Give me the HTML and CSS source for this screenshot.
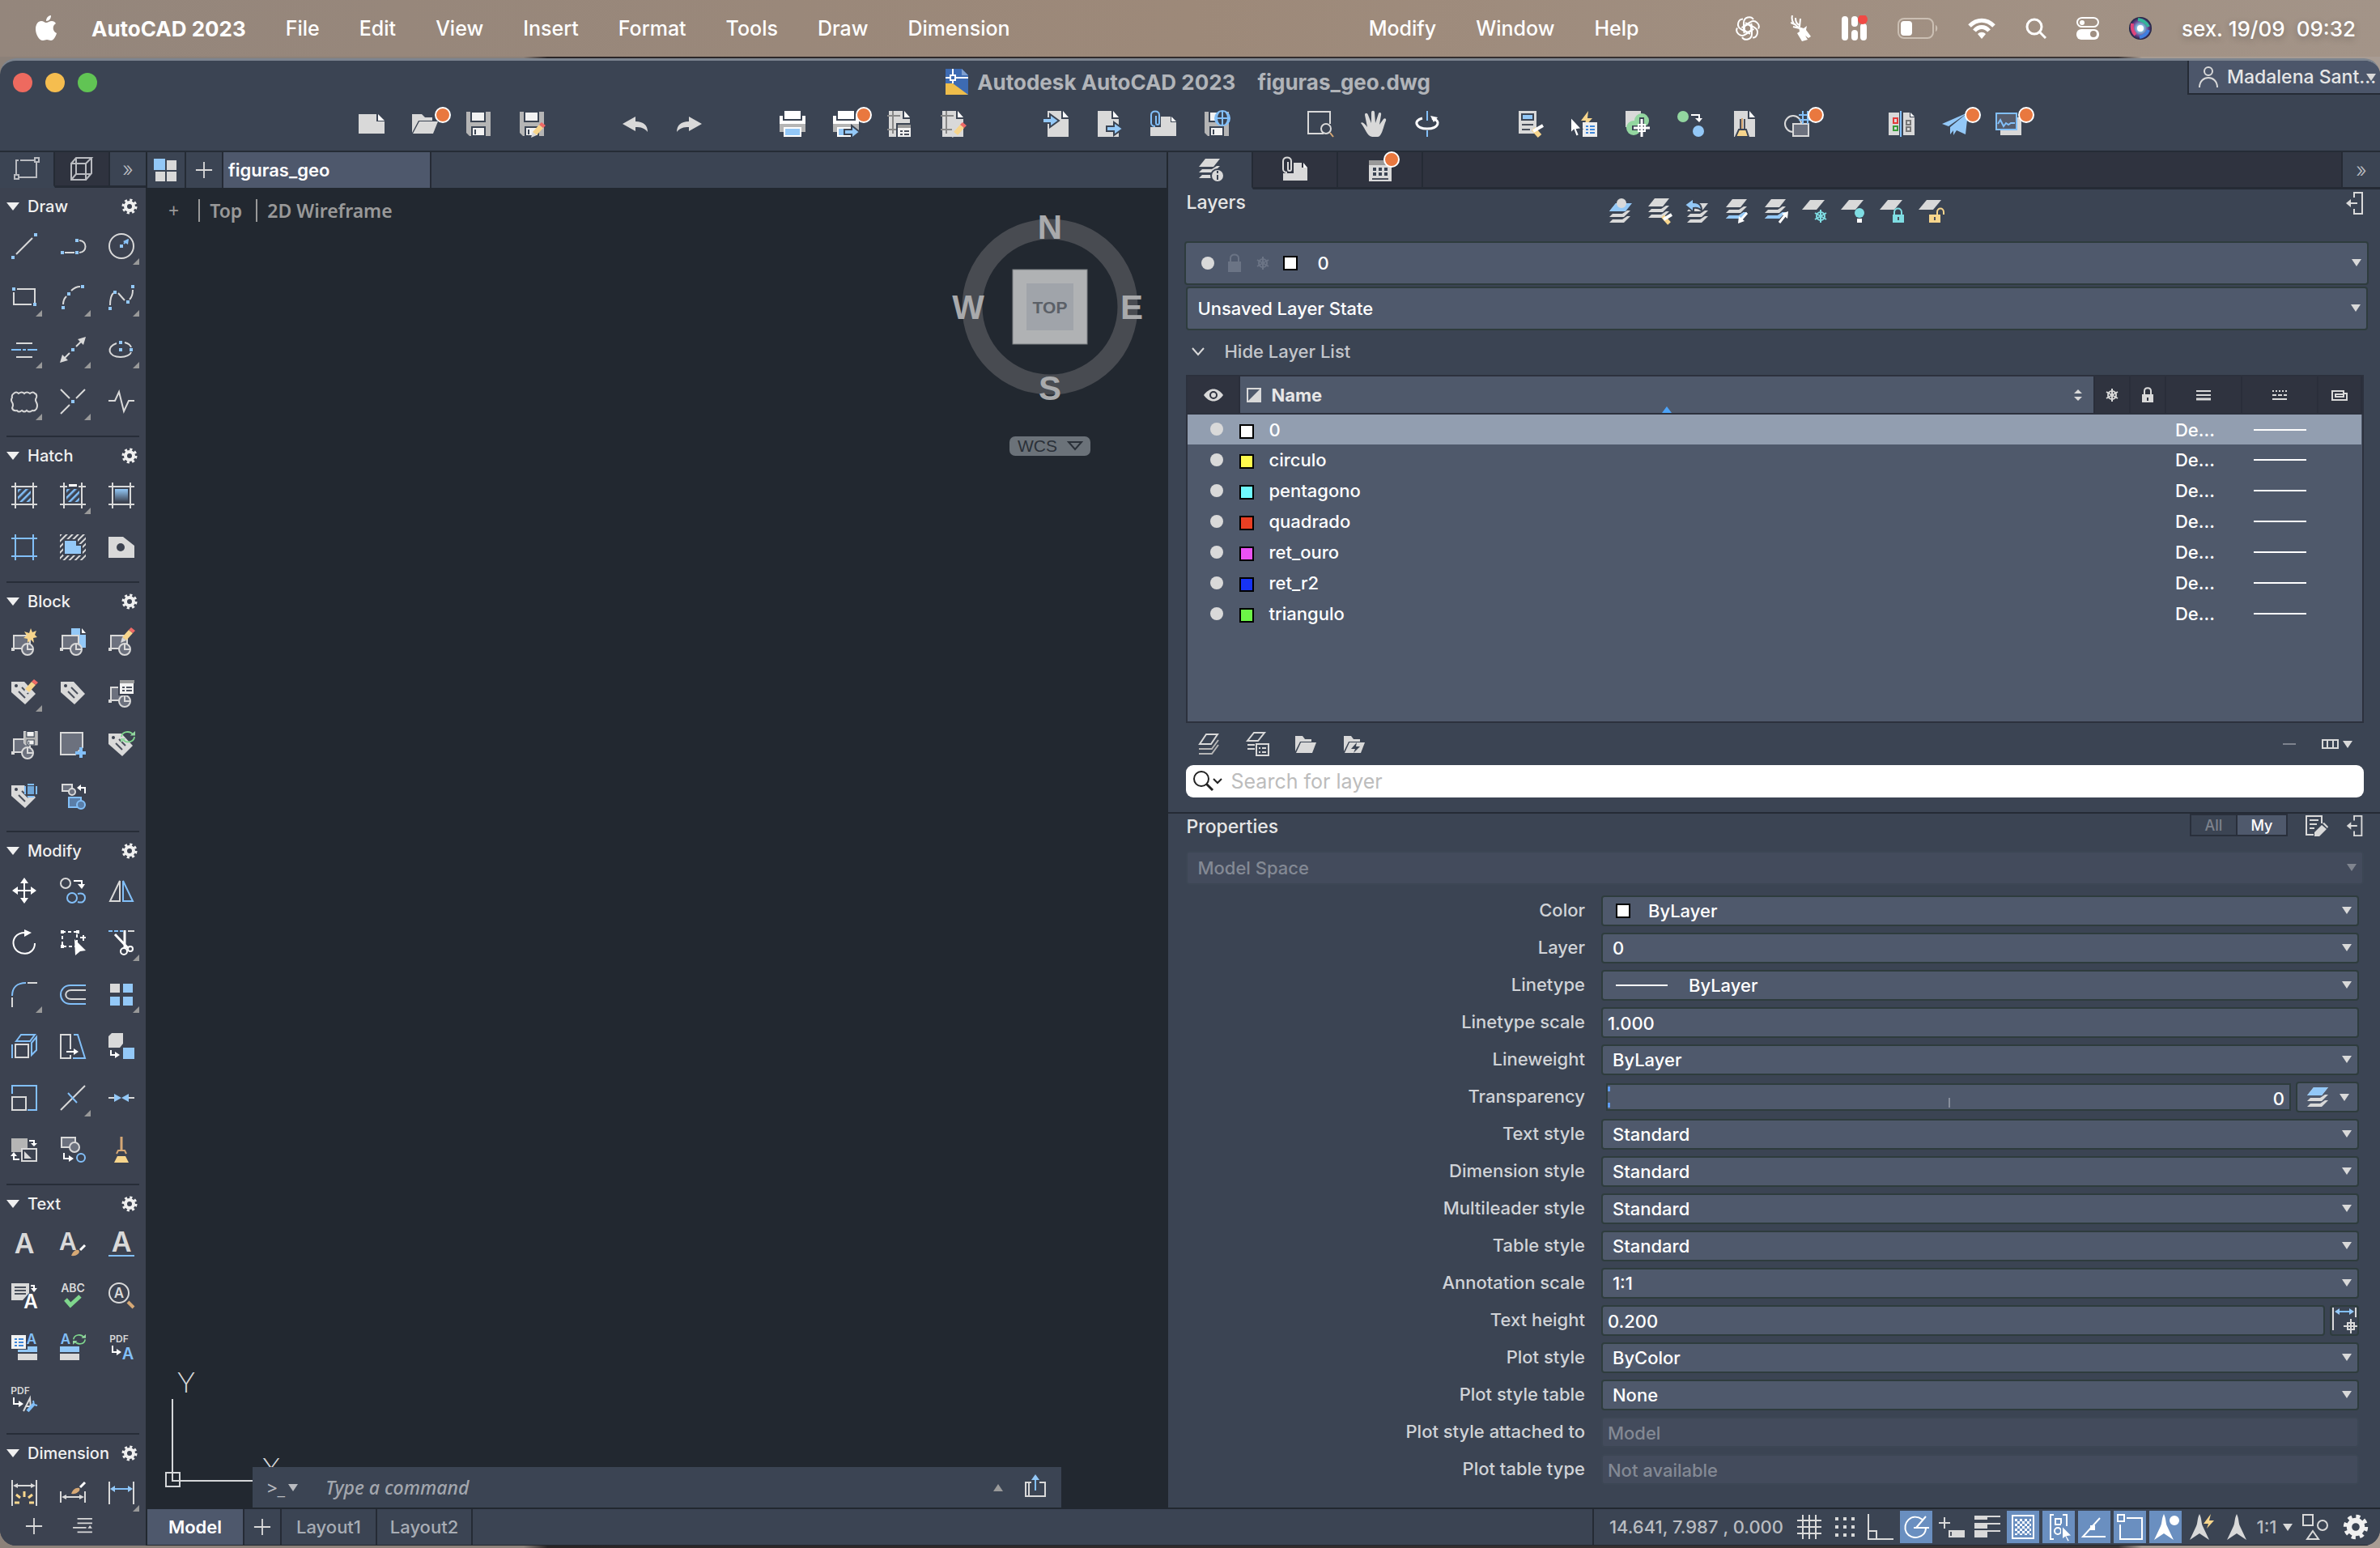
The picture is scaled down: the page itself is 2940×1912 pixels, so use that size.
FILE: index.html
```html
<!DOCTYPE html>
<html lang="pt">
<head>
  <meta charset="UTF-8" />
  <meta name="viewport" content="width=device-width, initial-scale=1.0"/>
  <title>Autodesk AutoCAD 2023 - figuras_geo.dwg</title>
  <link rel="stylesheet" href="styles.css">
</head>
<body>

  <!-- shared icon parts -->
  <svg class="defs" width="0" height="0" aria-hidden="true">
    <defs>
      <linearGradient id="grad" x1="0" y1="0" x2="0" y2="1"><stop offset="0" stop-color="#93c8f7"/><stop offset="1" stop-color="#3c4250"/></linearGradient>
      <radialGradient id="siri"><stop offset="0" stop-color="#fff"/><stop offset=".35" stop-color="#7fb6d8"/><stop offset=".7" stop-color="#6a3f8c"/><stop offset="1" stop-color="#1c2440"/></radialGradient>
      <pattern id="hatch" width="6" height="6" patternUnits="userSpaceOnUse" patternTransform="rotate(45)"><path d="M1 0V6" stroke="#82bff8" stroke-width="3"/></pattern>
      <pattern id="hatchw" width="5" height="5" patternUnits="userSpaceOnUse" patternTransform="rotate(45)"><path d="M1 0V5" stroke="#d9d9d9" stroke-width="2"/></pattern>
      <pattern id="checks" width="6" height="6" patternUnits="userSpaceOnUse"><path d="M0 0h3v3H0zM3 3h3v3H3z" fill="#fff"/></pattern>
      <g id="gear"><circle cx="10" cy="10" r="5" fill="none" stroke="#f0f0f0" stroke-width="4"/><circle cx="10" cy="10" r="8" fill="none" stroke="#f0f0f0" stroke-width="3" stroke-dasharray="3.14 3.14"/></g>
      <g id="badge"><circle cx="38" cy="5" r="9" fill="#e9783f" stroke="#fff" stroke-width="2"/></g>
      <g id="pencil"><path class="y" d="M2 12L10 3l5 4-8 9z"/><path class="f" d="M2 12l5 4-7 3z"/><path class="r" d="M10 3l3-3 5 4-3 3z"/></g>
      <g id="floppy"><path fill="#b5b5b5" d="M1 1h30v30H5l-4-4z"/><path fill="#f2f2f2" stroke="#3b4453" d="M7 1h17v12H7z"/><path fill="#f2f2f2" stroke="#3b4453" d="M8 20h16v11H8z"/><path stroke="#3b4453" d="M12 23v6"/></g>
      <g id="page"><path class="f" d="M3 0h17v10h9v22H3z"/><path class="wf" d="M22 0l7 8h-7z"/></g>
      <g id="printer"><path class="wf" d="M6 0h20v10H6z"/><path class="wf" d="M0 6h4v6h24V6h4v14H0z"/><path fill="#b5b5b5" stroke="none" d="M0 16h32v10H0z"/><path class="b" stroke="#fff" d="M6 21h20v10H6z"/></g>
      <g id="blk"><path fill="#6c717e" d="M3 6h20v16H3z"/><path class="f" d="M0 21h4v4H0z"/><circle cx="20" cy="23" r="7" fill="#6c717e"/><path d="M20 16v7h7"/></g>
      <g id="tag"><path class="f" d="M0 2h16l14 15-13 13L0 15z"/><circle cx="6" cy="7" r="2" fill="#3c4250" stroke="none"/><path class="dk" d="M13 9l8 8M9 14l8 8"/></g>
      <g id="stack"><path class="f" d="M10 2H28L20 12H2z"/><path class="f" d="M24 11h4l-8 8H2l4-4h12z"/><path class="f" d="M24 18h4l-8 8H2l4-4h12z"/></g>
      <g id="sheet"><path class="f" d="M10 2H28L18 14H0z"/></g>
      <g id="snow"><path d="M0-8V8M-7-4L7 4M-7 4L7-4"/><circle r="5"/></g>
      <g id="frame"><path d="M0 5h32M0 27h32M5 0v32M27 0v32"/></g>
      <g id="dock"><path d="M10 8V2h10v26H10v-6M14 15H4"/><path class="f" d="M0 15l6-5v10z"/></g>
      <g id="plane"><path d="M16 0c3 6 2 11 4 15l8 17-12-8-12 8 8-17c2-4 1-9 4-15z"/></g>
      <g id="sync"><path class="sg" d="M1 8c1-8 12-9 16-3M19 8c-1 8-12 9-16 3"/><path class="g" d="M13 6h7V0zM7 10H0v6z"/></g>
    </defs>
  </svg>

  <header class="menubar">
    <svg class="apple" viewBox="0 0 26 32" aria-label="Apple"><path fill="#fff" d="M13 9c2 0 4-2 7-2 2 0 4 1 5 3-5 3-4 10 1 12-1 4-4 9-7 9-2 0-3-1-5-1s-3 1-5 1C4 31 0 23 0 17 0 11 3 7 7 7c3 0 4 2 6 2zM13 7c0-4 3-7 6-7 0 4-2 7-6 7z"/></svg>
    <nav class="menus">
      <button class="menu app-name">AutoCAD 2023</button>
      <button class="menu">File</button>
      <button class="menu">Edit</button>
      <button class="menu">View</button>
      <button class="menu">Insert</button>
      <button class="menu">Format</button>
      <button class="menu">Tools</button>
      <button class="menu">Draw</button>
      <button class="menu">Dimension</button>
      <span class="notch"></span>
      <button class="menu">Modify</button>
      <button class="menu">Window</button>
      <button class="menu">Help</button>
    </nav>
    <div class="tray">
      <svg width="32" height="32" viewBox="0 0 32 32" fill="none" stroke="#fff" stroke-width="2"><g id="petal"><path d="M16 11l5 3v9c0 7-9 9-12 4"/><path d="M21 14l-8-5"/></g><use href="#petal" transform="rotate(60 16 16)"/><use href="#petal" transform="rotate(120 16 16)"/><use href="#petal" transform="rotate(180 16 16)"/><use href="#petal" transform="rotate(240 16 16)"/><use href="#petal" transform="rotate(300 16 16)"/></svg>
      <svg width="26" height="32" viewBox="0 0 26 32"><path fill="none" stroke="#fff" stroke-width="2" d="M2 0c-2 8 3 12 10 16M6 3c0 5 2 8 5 9M0 9l7 3M12 4l-1 10M3 14l8 2"/><path fill="#fff" d="M10 14l6 2 4-3-1 5 6 8-3 2-4-3 3 5-7 2-3-5-3-5 3-2z"/></svg>
      <svg width="32" height="32" viewBox="0 0 32 32"><path stroke="#fff" stroke-width="8" stroke-linecap="round" d="M4 5v22M16 5v5M16 22v5M27 14v13"/><circle cx="26" cy="5" r="6" fill="#f04a45"/></svg>
      <svg width="50" height="26" viewBox="0 0 50 26"><rect x="1" y="1" width="43" height="24" rx="7" fill="none" stroke="#cbbfb3" stroke-width="2"/><rect x="4" y="4" width="14" height="18" rx="4" fill="#fff"/><path d="M47 9c3 1 3 7 0 8z" fill="#cbbfb3"/></svg>
      <svg width="34" height="26" viewBox="0 0 34 26" fill="none" stroke="#fff" stroke-width="5"><path d="M2 10c9-9 21-9 30 0M8 16c5-6 13-6 18 0"/><path fill="#fff" stroke="none" d="M17 26l-5-6c3-3 7-3 10 0z"/></svg>
      <svg width="26" height="26" viewBox="0 0 26 26" fill="none" stroke="#fff" stroke-width="3"><circle cx="11" cy="11" r="9"/><path d="M17 17l8 8"/></svg>
      <svg width="28" height="28" viewBox="0 0 28 28"><rect x="1" y="1" width="26" height="11" rx="6" fill="none" stroke="#fff" stroke-width="2"/><circle cx="7" cy="7" r="3" fill="#fff"/><rect y="15" width="28" height="13" rx="6" fill="#fff"/><circle cx="21" cy="21" r="4" fill="#9f8f82"/></svg>
      <svg width="28" height="28" viewBox="0 0 28 28"><circle cx="14" cy="14" r="14" fill="url(#siri)"/><path d="M4 8c-1 6 0 10 4 14" stroke="#e0457b" stroke-width="4" fill="none"/><path d="M11 3c6 1 11 4 13 9" stroke="#35b59a" stroke-width="4" fill="none"/><path d="M24 16c-2 5-6 8-11 9" stroke="#3f7fe0" stroke-width="4" fill="none"/><circle cx="14" cy="14" r="4" fill="#fff"/></svg>
      <time class="clock"><span>sex. 19/09</span><span>09:32</span></time>
    </div>
  </header>

  <div class="window">
    <div class="titlebar">
      <div class="lights"><button class="light close" aria-label="Close"></button><button class="light mini" aria-label="Minimize"></button><button class="light full" aria-label="Full screen"></button></div>
      <h1 class="title">
        <svg width="28" height="32" viewBox="0 0 28 32"><path fill="#3d6bb3" d="M0 0h20l8 8v24H0z"/><path fill="#7f9fcf" d="M20 0l8 8h-8z"/><path fill="#eebd4b" d="M0 18h9l19 14H0z"/><path d="M0 11h28M9 0v18" stroke="#fff" stroke-width="2"/><rect x="6" y="8" width="6" height="6" fill="#3d6bb3" stroke="#fff" stroke-width="2"/></svg>
        <span>Autodesk AutoCAD 2023</span><span class="doc-name">figuras_geo.dwg</span>
      </h1>
      <button class="user">
        <svg class="ic" viewBox="0 0 26 28"><circle cx="13" cy="7" r="5"/><path d="M2 27c0-16 22-16 22 0"/></svg>
        <span>Madalena Sant…</span><i class="caret"></i>
      </button>
    </div>

    <div class="toolbar">
      <div class="tools">
        <button aria-label="New"><svg class="ic" viewBox="0 0 32 32"><path class="f" d="M0 4h22v9h10v15H0z"/><path class="wf" d="M24 4l8 8h-8z"/></svg></button>
        <button aria-label="Open"><svg class="ic" viewBox="0 0 32 32"><path class="f" d="M0 4h12l4 4h9v4H8L0 27z"/><path class="f" d="M9 13h23l-6 15H1z"/><use href="#badge"/></svg></button>
        <button aria-label="Save"><svg class="ic nostroke" viewBox="0 0 32 32"><use href="#floppy"/></svg></button>
        <button aria-label="Save as"><svg class="ic nostroke" viewBox="0 0 32 32"><use href="#floppy"/><use href="#pencil" x="15" y="14"/></svg></button>
      </div>
      <div class="tools">
        <button aria-label="Undo"><svg class="ic" viewBox="0 0 32 32"><path class="f" d="M0 16L16 7v6c10 0 15 5 15 13-4-5-8-6-15-6v5z"/></svg></button>
        <button aria-label="Redo"><svg class="ic" viewBox="0 0 32 32"><path class="f" d="M32 16L16 7v6C6 13 1 18 1 26c4-5 8-6 15-6v5z"/></svg></button>
      </div>
      <div class="tools">
        <button aria-label="Print"><svg class="ic" viewBox="0 0 32 32"><use href="#printer"/></svg></button>
        <button aria-label="Batch publish"><svg class="ic" viewBox="0 0 32 32"><use href="#printer"/><path class="b" stroke="#3b4453" d="M14 23h9v-5l10 8-10 8v-5h-9z"/><use href="#badge"/></svg></button>
        <button aria-label="Page setup"><svg class="ic" viewBox="0 0 32 32"><use href="#page"/><path d="M8 0v28M1 6h16M1 23h14" stroke="#888"/><path fill="#f2f2f2" stroke="#3b4453" d="M13 16h18v17H13z"/><path fill="#999" stroke="none" d="M14 17h16v4H14z"/><path class="dk" d="M17 25h3M22 25h6M17 29h3M22 29h6"/></svg></button>
        <button aria-label="Plot style"><svg class="ic" viewBox="0 0 32 32"><use href="#page"/><path d="M8 0v28M1 6h16M1 23h14" stroke="#888"/><use href="#pencil" x="15" y="14"/></svg></button>
      </div>
      <div class="tools">
        <button aria-label="Import"><svg class="ic" viewBox="0 0 32 32"><use href="#page" x="2"/><path class="b" stroke="#3b4453" d="M-1 9h9V4l11 8-11 8v-5h-9z"/></svg></button>
        <button aria-label="Export"><svg class="ic" viewBox="0 0 32 32"><use href="#page" x="-2"/><path class="b" stroke="#3b4453" d="M12 19h9v-5l11 8-11 8v-5h-9z"/></svg></button>
        <button aria-label="Attach"><svg class="ic" viewBox="0 0 32 32"><path class="f" d="M0 20h13V7h12v7h7v17H0z"/><path class="wf" d="M26 7l6 6h-6z"/><path class="sb" d="M7 6v9a2 2 0 0 0 4 0V5c0-6-10-6-10 0v10c0 3 3 4 5 4"/></svg></button>
        <button aria-label="Save to web"><svg class="ic nostroke" viewBox="0 0 32 32"><use href="#floppy"/><circle cx="23" cy="9" r="9" fill="#3b4453" class="sb"/><path class="sb" d="M14 9h18M23 0v18M19 1c-4 5-4 11 0 16M27 1c4 5 4 11 0 16"/></svg></button>
      </div>
      <div class="tools">
        <button aria-label="Zoom window"><svg class="ic" viewBox="0 0 32 32"><path d="M20 28H1V1h27v15"/><circle cx="23" cy="22" r="6" fill="#3b4453"/><path stroke="#d6a875" d="M28 27l4 5"/></svg></button>
        <button aria-label="Pan"><svg class="ic" viewBox="0 0 32 32"><path class="f" d="M0 15c2-2 5 1 8 5L5 5c0-3 3-3 4 0l4 10V2c0-3 4-3 4 0l1 13 4-12c1-2 4-1 3 2l-2 12 5-7c2-2 4 0 3 2-3 7-5 20-10 20h-7C7 31 5 20 0 15z"/></svg></button>
        <button aria-label="Orbit"><svg class="ic" viewBox="0 0 32 32"><path class="sb" d="M16 0v12M16 24v8"/><path stroke="#fff" stroke-width="3" d="M10 9C-2 12 2 22 16 22s18-10 6-13"/><path class="wf" d="M20 6l9 2-5 6z"/></svg></button>
      </div>
      <div class="tools">
        <button aria-label="Tool palette"><svg class="ic" viewBox="0 0 32 32"><path class="f" d="M1 0h22v28H1z"/><path class="b" stroke="#3b4453" d="M5 4h14v7H5z"/><path class="dk" d="M5 17h14M5 23h10"/><path stroke="#f7d58c" stroke-width="6" d="M19 22l8 9"/><path stroke="#fff" stroke-width="4" d="M19 25l12-7"/></svg></button>
        <button aria-label="Quick select"><svg class="ic" viewBox="0 0 32 32"><path class="y" d="M21 0l-9 12h6l-3 9 11-12h-6z"/><path fill="#eee" stroke="none" d="M14 14h18v18H14z"/><path stroke="#3f87d9" d="M18 19h3M23 19h6M18 23h3M23 23h6M18 27h3M23 27h6"/><path class="wf" stroke="#3b4453" d="M-1 7l14 15-6 1 3 7-4 2-3-8-4 4z"/></svg></button>
        <button aria-label="Geolocation"><svg class="ic" viewBox="0 0 32 32"><path class="f" d="M1 0h19v20H1z"/><circle cx="21" cy="12" r="9" class="g"/><circle cx="11" cy="21" r="9" class="g"/><path stroke="#3b4453" stroke-width="6" d="M21 8v26M9 21h24"/><path stroke="#fff" stroke-width="3" d="M21 10v22M11 21h20"/><path stroke="#fff" d="M17 17h8v8h-8z"/></svg></button>
        <button aria-label="Count"><svg class="ic" viewBox="0 0 32 32"><circle cx="6" cy="7" r="7" class="g"/><circle cx="25" cy="25" r="7" class="b"/><path stroke="#fff" d="M16 5h10v5"/><path class="wf" d="M21 9h9l-4 5z"/></svg></button>
        <button aria-label="Purge"><svg class="ic" viewBox="0 0 32 32"><use href="#page"/><path class="dk" d="M11 10v12M16 10v12"/><path stroke="#d6a875" d="M13 9v14"/><path class="y" stroke="#3b4453" d="M9 23h9l3 9H5z"/></svg></button>
        <button aria-label="Number match"><svg class="ic" viewBox="0 0 32 32"><circle cx="10" cy="16" r="10"/><path fill="#6c717e" d="M10 16h19v15H10z"/><path class="sb" d="M22 0v16M28 0v16M17 5h16M17 11h16"/><use href="#badge"/></svg></button>
      </div>
      <div class="tools">
        <button aria-label="Compare"><svg class="ic" viewBox="0 0 32 32"><path class="f" d="M0 2h13v28H0zM18 2h8v6h6v22H18z"/><path class="wf" d="M27 2l5 5h-5z"/><path stroke="#e33b3b" d="M6 9h5v6H6z"/><path stroke="#3a9b3a" d="M6 19h5v5H6z"/><path stroke="#777" d="M22 12h5v5h-5zM22 20h5v5h-5z"/><path class="sb" d="M15 0v32"/></svg></button>
        <button aria-label="Share"><svg class="ic" viewBox="0 0 32 32"><path class="b" d="M32 2L0 16l8 3zM32 2L10 20v9zM32 2L14 22v8l4-6 11 5z"/><use href="#badge"/></svg></button>
        <button aria-label="Activity"><svg class="ic" viewBox="0 0 32 32"><path class="f" d="M6 8h26v22H6z"/><path class="sb" fill="#555c6c" d="M1 3h25v20H1z"/><path class="sb" d="M3 16l3-5 4 8 3-4 3 2 3-2h5"/><use href="#badge"/></svg></button>
      </div>
    </div>

    <div class="workspace">
      <aside class="palette">
        <div class="tabs">
          <button class="tab tab-on" aria-label="2D"><svg class="ic" viewBox="0 0 32 32"><path stroke="#b9bbc0" d="M8 5h18M28 8v18H6M3 23V5h3"/><path stroke="#b9bbc0" d="M26 2h5v5h-5zM1 23h5v5H1z"/></svg></button>
          <button class="tab" aria-label="3D"><svg class="ic" viewBox="0 0 32 32"><path stroke="#b9bbc0" d="M3 9h18v20H3zM3 9l6-7h19l-7 7M28 2v19l-7 8M9 2v20M9 22h18M9 22l-6 7"/></svg></button>
          <button class="tab more tab-on" aria-label="More">»</button>
        </div>

        <section class="group">
          <h2 class="group-head"><i class="tri"></i>Draw<svg class="gear" viewBox="0 0 20 20"><use href="#gear"/></svg></h2>
          <div class="group-grid">
            <button aria-label="Line"><svg class="ic" viewBox="0 0 32 32"><path d="M6 26L26 6"/><path class="b" d="M0 28h4v4H0zM28 0h4v4h-4z"/></svg></button>
            <button aria-label="Polyline"><svg class="ic" viewBox="0 0 32 32"><path d="M6 24h12M24 24c10 0 10-15 0-15"/><path class="b" d="M1 22h4v4H1zM19 22h4v4h-4zM19 7h4v4h-4z"/></svg></button>
            <button class="fly" aria-label="Circle"><svg class="ic" viewBox="0 0 32 32"><circle cx="16" cy="16" r="15"/><path class="b" d="M14 14h4v4h-4zM25 7l-1 7-6-4z"/><path class="sb" d="M19 13l5-5"/></svg></button>
            <button class="fly" aria-label="Rectangle"><svg class="ic" viewBox="0 0 32 32"><path d="M7 5h22v17M25 24H3V9"/><path class="b" d="M1 3h4v4H1zM27 22h4v4h-4z"/></svg></button>
            <button class="fly" aria-label="Arc"><svg class="ic" viewBox="0 0 32 32"><path d="M4 24c0-4 2-8 4-10M14 7c3-3 7-5 11-5"/><path class="b" d="M2 26h4v4H2zM9 9h4v4H9zM26 0h4v4h-4z"/></svg></button>
            <button class="fly" aria-label="Spline"><svg class="ic" viewBox="0 0 32 32"><path d="M2 25c0-6 1-12 4-15M12 10l8 9M26 18c3-3 4-7 4-12"/><path class="b" d="M0 27h4v4H0zM6 7h4v4H6zM22 19h4v4h-4zM28 0h4v4h-4z"/></svg></button>
            <button class="fly" aria-label="Construction line"><svg class="ic" viewBox="0 0 32 32"><path d="M6 8h20M6 25h20"/><path class="sb" d="M0 16h12M14 16h4M20 16h12"/></svg></button>
            <button class="fly" aria-label="Ray"><svg class="ic" viewBox="0 0 32 32"><path d="M5 27l7-7M20 12l7-7"/><path class="f" d="M0 32l3-10 7 7zM32 0l-3 10-7-7z"/><path class="b" d="M14 14h4v4h-4z"/></svg></button>
            <button class="fly" aria-label="Ellipse"><svg class="ic" viewBox="0 0 32 32"><path d="M10 8C-3 12-1 25 15 25c7 0 12-3 13-6M20 7c4 1 7 3 8 6"/><path class="b" d="M13 5h4v4h-4zM13 14h4v4h-4zM26 14h4v4h-4z"/></svg></button>
            <button class="fly" aria-label="Revision cloud"><svg class="ic" viewBox="0 0 32 32"><path d="M3 6q3-3 6 0q4-3 7 0q3-3 7 0q4-3 6 0q3 1 2 5q-2 3 0 6q2 4 0 8q-2 3-5 2q-4 3-7 0q-3 3-6 0q-4 3-6 0q-5 1-6-3q2-4 0-7q-2-3 0-6q-1-3 2-5z"/></svg></button>
            <button class="fly" aria-label="Break"><svg class="ic" viewBox="0 0 32 32"><path d="M1 1l11 11M31 1L20 12M1 31l11-11"/><path class="b" d="M14 14h4v4h-4z"/></svg></button>
            <button aria-label="Break line"><svg class="ic" viewBox="0 0 32 32"><path d="M0 15h8l5-11 6 24 6-13h7"/></svg></button>
          </div>
        </section>

        <section class="group">
          <h2 class="group-head"><i class="tri"></i>Hatch<svg class="gear" viewBox="0 0 20 20"><use href="#gear"/></svg></h2>
          <div class="group-grid">
            <button aria-label="Hatch"><svg class="ic" viewBox="0 0 32 32"><use href="#frame"/><path fill="url(#hatch)" stroke="none" d="M8 8h16v16H8z"/></svg></button>
            <button class="fly" aria-label="Hatch recent"><svg class="ic" viewBox="0 0 32 32"><use href="#frame"/><path fill="url(#hatch)" stroke="none" d="M8 8h16v16H8z"/><path class="wf" stroke="#3c4250" d="M10 1h12v5H10z"/></svg></button>
            <button aria-label="Gradient"><svg class="ic" viewBox="0 0 32 32"><use href="#frame"/><path fill="url(#grad)" stroke="none" d="M8 8h16v16H8z"/></svg></button>
            <button aria-label="Boundary"><svg class="ic" viewBox="0 0 32 32"><path class="sb" d="M0 5h32M0 27h32M5 0v32M27 0v32"/></svg></button>
            <button aria-label="Wipeout"><svg class="ic" viewBox="0 0 32 32"><path fill="url(#hatchw)" stroke="none" d="M0 0h32v32H0z"/><path class="b" stroke="#3c4250" d="M5 7h16v6h6v12H5z"/></svg></button>
            <button aria-label="Region"><svg class="ic" viewBox="0 0 32 32"><path class="f" d="M0 3h18l14 11v15H0z"/><circle cx="15" cy="16" r="5" fill="#3c4250" stroke="none"/></svg></button>
          </div>
        </section>

        <section class="group">
          <h2 class="group-head"><i class="tri"></i>Block<svg class="gear" viewBox="0 0 20 20"><use href="#gear"/></svg></h2>
          <div class="group-grid">
            <button aria-label="Create block"><svg class="ic" viewBox="0 0 32 32"><use href="#blk" y="3"/><path class="y" d="M24 0l2 5 5-2-2 5 3 3-5 1 1 6-4-4-4 4v-5l-5-1 4-3-3-5 6 2z"/></svg></button>
            <button aria-label="Insert block"><svg class="ic" viewBox="0 0 32 32"><path class="b" d="M14 0h11v8h7v16H14z"/><path class="wf" d="M27 0l5 6h-5z"/><use href="#blk" y="3"/></svg></button>
            <button aria-label="Edit block"><svg class="ic" viewBox="0 0 32 32"><use href="#blk" y="3"/><use href="#pencil" x="15" y="-1"/></svg></button>
            <button class="fly" aria-label="Edit attribute"><svg class="ic" viewBox="0 0 32 32"><use href="#tag"/><use href="#pencil" x="15" y="-1"/></svg></button>
            <button aria-label="Attribute"><svg class="ic" viewBox="0 0 32 32"><use href="#tag" x="1"/></svg></button>
            <button aria-label="Attribute manager"><svg class="ic" viewBox="0 0 32 32"><use href="#blk" y="3"/><path fill="#f2f2f2" stroke="#3c4250" d="M13 0h19v18H13z"/><path fill="#999" stroke="none" d="M14 0h18v4H14z"/><path class="dk" d="M17 9h3M22 9h7M17 13h3M22 13h7"/></svg></button>
            <button aria-label="Write block"><svg class="ic" viewBox="0 0 32 32"><use href="#blk" y="3"/><use href="#floppy" transform="translate(15 -1) scale(.55)"/></svg></button>
            <button aria-label="Set base"><svg class="ic" viewBox="0 0 32 32"><path fill="#6c717e" d="M1 1h27v18l-9 9H1z"/><path class="sb" stroke-width="4" d="M26 19v13M19 26h13"/></svg></button>
            <button aria-label="Sync attributes"><svg class="ic" viewBox="0 0 32 32"><use href="#tag"/><use href="#sync" transform="translate(15 -1) scale(.9)"/></svg></button>
            <button aria-label="Attribute display"><svg class="ic" viewBox="0 0 32 32"><use href="#tag"/><path fill="#6fa6d8" stroke="#3c4250" d="M19 2h10v12H19z"/><path class="sb" d="M17 3v10M31 3v10M20 1h8M20 16h8"/></svg></button>
            <button aria-label="Replace block"><svg class="ic" viewBox="0 0 32 32"><path fill="#6c717e" d="M3 1h12v8H3z"/><circle cx="15" cy="10" r="4" fill="#6c717e"/><path stroke="#fff" d="M31 12V5h-7"/><path class="wf" d="M21 5l5-4v8z"/><path class="sb" fill="#5a7ea8" d="M11 17h15v12H11z"/><circle class="sb" cx="26" cy="26" r="5" fill="#5a7ea8"/></svg></button>
          </div>
        </section>

        <section class="group">
          <h2 class="group-head"><i class="tri"></i>Modify<svg class="gear" viewBox="0 0 20 20"><use href="#gear"/></svg></h2>
          <div class="group-grid">
            <button aria-label="Move"><svg class="ic" viewBox="0 0 32 32"><path stroke="#fff" d="M16 4v24M4 16h24"/><path class="wf" d="M16 0l5 7H11zM16 32l5-7H11zM1 16l7-5v10zM31 16l-7-5v10z"/></svg></button>
            <button aria-label="Copy"><svg class="ic" viewBox="0 0 32 32"><circle cx="7" cy="7" r="6"/><circle class="sb" cx="15" cy="25" r="6"/><path class="sb" d="M22 20c12-4 12 14 0 10"/><path stroke="#fff" d="M17 4h10v6"/><path class="wf" d="M22 8h9l-4 6z"/></svg></button>
            <button aria-label="Mirror"><svg class="ic" viewBox="0 0 32 32"><path d="M14 4v25H2z"/><path class="sb" d="M18 4v25h12z"/></svg></button>
            <button aria-label="Rotate"><svg class="ic" viewBox="0 0 32 32"><path stroke="#fff" d="M17 4C5 4 1 13 3 20c4 14 26 13 26-3"/><path class="wf" d="M16 0l9 4-9 5z"/></svg></button>
            <button aria-label="Stretch"><svg class="ic" viewBox="0 0 32 32"><path stroke-dasharray="4 3" stroke="#fff" d="M3 3h18v18H3z"/><path class="wf" d="M1 1h4v4H1zM20 1h4v4h-4zM1 19h4v4H1z"/><path class="wf" d="M18 12l14 14-7 1-6 5z"/><path stroke="#fff" d="M25 10h7M29 7v7"/></svg></button>
            <button class="fly" aria-label="Trim"><svg class="ic" viewBox="0 0 32 32"><path class="sb" stroke-dasharray="5 2" d="M0 2h18"/><path d="M24 2h8"/><path stroke="#fff" stroke-width="3" d="M8 6l16 17M20 1v22"/><circle stroke="#fff" cx="19" cy="27" r="4"/><circle stroke="#fff" cx="27" cy="24" r="3"/></svg></button>
            <button class="fly" aria-label="Fillet"><svg class="ic" viewBox="0 0 32 32"><path class="sb" d="M1 18C1 8 7 2 18 2"/><path d="M20 2h12M1 20v12"/></svg></button>
            <button aria-label="Offset"><svg class="ic" viewBox="0 0 32 32"><path class="sb" d="M32 5H13c-16 0-16 23 0 23h19"/><path d="M32 11H14c-9 0-9 11 0 11h18"/></svg></button>
            <button class="fly" aria-label="Array"><svg class="ic" viewBox="0 0 32 32"><path class="f" d="M2 3h12v11H2z"/><path class="b" d="M18 3h12v11H18zM2 19h12v11H2zM18 19h12v11H18z"/></svg></button>
            <button aria-label="Press pull"><svg class="ic" viewBox="0 0 32 32"><path d="M5 14h16v16H5z"/><path class="sb" d="M1 14v17M6 10l6-8h17l-6 8zM25 12l6-7v16l-6 6z"/></svg></button>
            <button aria-label="Taper"><svg class="ic" viewBox="0 0 32 32"><path d="M13 20V2H1v29h12v-4"/><path class="sb" d="M17 2h5l9 29H16"/><path stroke="#fff" d="M8 23h10"/><path class="wf" d="M17 19l6 4-6 4z"/></svg></button>
            <button aria-label="Extract"><svg class="ic" viewBox="0 0 32 32"><path class="f" d="M0 4l4-4h14v13l-4 5H0z"/><path stroke="#fff" d="M3 21v6h7"/><path class="wf" d="M8 23l6 4-6 4z"/><path class="b" d="M18 18h14v14H18z"/></svg></button>
            <button aria-label="Scale"><svg class="ic" viewBox="0 0 32 32"><path d="M1 15h17v16H1z"/><path class="sb" d="M1 11V1h30v30H20"/></svg></button>
            <button class="fly" aria-label="Break at point"><svg class="ic" viewBox="0 0 32 32"><path d="M1 31L31 1"/><path class="sb" d="M10 10l11 12"/></svg></button>
            <button aria-label="Join"><svg class="ic" viewBox="0 0 32 32"><path d="M0 16h8M24 16h8"/><path class="b" d="M7 11l9 5-9 5zM25 11l-9 5 9 5z"/></svg></button>
            <button aria-label="Draw order"><svg class="ic" viewBox="0 0 32 32"><path fill="#b5b5b5" stroke="none" d="M0 2h20v12h-8v5H0z"/><path d="M13 15h18v15H13z"/><path class="f" d="M16 18l9 9h-9z"/><path stroke="#fff" d="M22 5h6v4M10 28H3v-5"/><path class="wf" d="M24 8h8l-4 4zM-1 24h8l-4-5z"/></svg></button>
            <button aria-label="Extract copy"><svg class="ic" viewBox="0 0 32 32"><path fill="#6c717e" d="M2 1h17v12H2z"/><circle cx="18" cy="13" r="6" fill="#6c717e"/><path stroke="#fff" d="M5 20v7h7"/><path class="wf" d="M11 23l6 4-6 4z"/><circle class="sb" cx="26" cy="26" r="5"/></svg></button>
            <button aria-label="Clean"><svg class="ic" viewBox="0 0 32 32"><path stroke="#d6a875" stroke-width="3" d="M16 0v16"/><path stroke="#d6a875" d="M10 21l2-4h8l2 4"/><path class="y" d="M11 24h10l4 8H7z"/></svg></button>
          </div>
        </section>

        <section class="group">
          <h2 class="group-head"><i class="tri"></i>Text<svg class="gear" viewBox="0 0 20 20"><use href="#gear"/></svg></h2>
          <div class="group-grid">
            <button aria-label="Text"><svg class="ic" viewBox="0 0 32 32"><text x="16" y="28" font-size="34" text-anchor="middle">A</text></svg></button>
            <button aria-label="Text style"><svg class="ic" viewBox="0 0 32 32"><text x="10" y="24" font-size="30" text-anchor="middle">A</text><path stroke="#fff" stroke-width="3" d="M25 24l6-6"/><path fill="#d6a875" stroke="none" d="M14 31c2-5 5-8 9-7 3 3-2 8-9 7z"/></svg></button>
            <button aria-label="Single line text"><svg class="ic" viewBox="0 0 32 32"><text x="16" y="26" font-size="34" text-anchor="middle">A</text><path class="sb" d="M0 31h32"/></svg></button>
            <button aria-label="Multiline text"><svg class="ic" viewBox="0 0 32 32"><path class="f" d="M0 1h22v12l-8 9H0z"/><path class="dk" d="M4 6h14M4 10h14M4 14h14"/><text x="24" y="32" font-size="24" text-anchor="middle" class="tw">A</text><path stroke="#fff" d="M24 4h4v4"/><path class="wf" d="M24 7h8l-4 5z"/></svg></button>
            <button aria-label="Spelling"><svg class="ic" viewBox="0 0 32 32"><text x="16" y="12" font-size="14" text-anchor="middle">ABC</text><path class="sg" stroke-width="5" d="M7 21l6 7 12-11"/></svg></button>
            <button aria-label="Find text"><svg class="ic" viewBox="0 0 32 32"><circle cx="13" cy="13" r="12"/><text x="13" y="19" font-size="17" text-anchor="middle">A</text><path stroke="#d6a875" stroke-width="4" d="M24 24l7 7"/></svg></button>
            <button aria-label="Annotation list"><svg class="ic" viewBox="0 0 32 32"><path fill="#f2f2f2" stroke="none" d="M0 1h18v17H0z"/><path stroke="#3f87d9" d="M4 6h3M9 6h6M4 10h3M9 10h6M4 14h3M9 14h6"/><text x="25" y="12" font-size="17" text-anchor="middle" class="tb">A</text><path class="b" d="M20 15h12v7H8v-3h12z"/><path class="f" d="M8 24h24v8H8z"/></svg></button>
            <button aria-label="Annotation update"><svg class="ic" viewBox="0 0 32 32"><text x="7" y="12" font-size="17" text-anchor="middle" class="tb">A</text><use href="#sync" transform="translate(16 0) scale(.8)"/><path class="b" d="M0 15h24v7H0z"/><path class="f" d="M0 24h24v8H0z"/></svg></button>
            <button aria-label="PDF to text"><svg class="ic" viewBox="0 0 32 32"><text x="13" y="10" font-size="12" text-anchor="middle">PDF</text><path stroke="#fff" d="M5 14v8h7"/><path class="wf" d="M10 18l6 4-6 4z"/><text x="24" y="31" font-size="20" text-anchor="middle" class="tb">A</text></svg></button>
            <button aria-label="PDF settings"><svg class="ic" viewBox="0 0 32 32"><text x="11" y="10" font-size="12" text-anchor="middle">PDF</text><path stroke="#fff" d="M3 14v8h7"/><path class="wf" d="M9 18l6 4-6 4z"/><path d="M15 31l8-16 1 12M17 25h8"/><path class="sb" stroke-width="4" d="M20 31l8-9"/><path class="sb" d="M27 18l1 5 4 1"/></svg></button>
          </div>
        </section>

        <section class="group group-last">
          <h2 class="group-head"><i class="tri"></i>Dimension<svg class="gear" viewBox="0 0 20 20"><use href="#gear"/></svg></h2>
          <div class="group-grid">
            <button aria-label="Dimension"><svg class="ic" viewBox="0 0 32 32"><path d="M1 0v32M31 0v32M4 7h24"/><path class="f" d="M2 7l6-3v6zM30 7l-6-3v6z"/><path stroke="#f7d58c" stroke-width="3" d="M4 28h6M22 28h6M16 14v7M6 18l5 4M26 18l-5 4"/></svg></button>
            <button aria-label="Dimension style"><svg class="ic" viewBox="0 0 32 32"><path d="M1 14v14M31 14v14M4 21h24"/><path class="f" d="M2 21l6-3v6zM30 21l-6-3v6z"/><path stroke="#fff" stroke-width="3" d="M25 9l6-6"/><path fill="#d6a875" stroke="none" d="M14 17c2-5 5-8 10-7 2 3-3 8-10 7z"/></svg></button>
            <button class="fly" aria-label="Linear dimension"><svg class="ic" viewBox="0 0 32 32"><path d="M1 2v28M31 2v28"/><path class="sb" d="M4 11h24"/><path class="b" d="M2 11l6-4v8zM30 11l-6-4v8z"/></svg></button>
          </div>
        </section>

        <div class="palette-foot">
          <button aria-label="Add"><svg class="ic" viewBox="0 0 24 24"><path d="M12 1v22M1 12h22"/></svg></button>
          <button aria-label="List"><svg class="ic wide" viewBox="0 0 26 24"><path d="M6 2h20M6 8h20M0 14h18M6 20h20"/><path class="f" d="M20 15l3-4 3 4z"/></svg></button>
        </div>
      </aside>

      <div class="stage">
        <div class="columns">
          <main class="drawing">
            <div class="doc-tabs">
              <button class="doc-tab start" aria-label="Start"><svg class="ic" viewBox="0 0 32 32"><path class="b" d="M1 2h14v14H1z"/><path class="f" d="M17 4h12v12H17zM3 18h12v12H3zM17 18h12v12H17z"/></svg></button>
              <button class="doc-tab plus" aria-label="New drawing"><svg class="ic" viewBox="0 0 24 24"><path d="M12 1v22M1 12h22"/></svg></button>
              <button class="doc-tab current">figuras_geo</button>
            </div>
            <div class="canvas">
              <div class="view-label"><span class="vp-plus">+</span><span>Top</span><span>2D Wireframe</span></div>
              <svg class="compass" viewBox="0 0 250 250">
                <circle cx="125" cy="125" r="96" fill="none" stroke="#484b51" stroke-width="25"/>
                <text x="125" y="41">N</text><text x="125" y="240">S</text><text x="24" y="140">W</text><text x="226" y="140">E</text>
                <rect x="79" y="79" width="92" height="92" fill="#b0b2b4" stroke="#7d8083" stroke-width="1"/>
                <rect x="96" y="96" width="58" height="58" fill="#a0a4aa"/>
                <text class="top" x="125" y="133">TOP</text>
              </svg>
              <button class="wcs">WCS <svg width="20" height="12" viewBox="0 0 20 12"><path d="M2 1h16l-8 9z" fill="none" stroke="#2a3038" stroke-width="2"/></svg></button>
              <svg class="ucs" viewBox="0 0 150 170"><path d="M11 56v101h120" fill="none" stroke="#d5d7d9" stroke-width="2"/><rect x="3" y="147" width="17" height="17" fill="none" stroke="#d5d7d9" stroke-width="2"/><text x="28" y="48">Y</text><text x="133" y="154">X</text></svg>
              <div class="command">
                <button class="prompt" aria-label="Recent commands">&gt;_<i class="caret"></i></button>
                <input class="command-input" type="text" placeholder="Type a command" aria-label="Command">
                <i class="caret up"></i>
                <button aria-label="Expand"><svg class="ic" viewBox="0 0 32 32"><path d="M11 10H4v17h24V10h-7M8 10v17"/><path class="sb" d="M16 5v15"/><path class="b" d="M11 7l5-7 5 7z"/></svg></button>
              </div>
            </div>
          </main>

          <aside class="inspector">
            <div class="tabs panel-tabs">
              <button class="tab tab-on" aria-label="Layers"><svg class="ic" viewBox="0 0 32 32"><use href="#stack"/><circle cx="25" cy="23" r="8" fill="#d9d9d9" stroke="#3b4453"/><path stroke="#3b4453" d="M25 22v6M25 17v3"/></svg></button>
              <button class="tab" aria-label="References"><svg class="ic" viewBox="0 0 32 32"><path class="f" d="M1 20h13V7h10v6h7v16H1z"/><path class="wf" d="M26 7l5 6h-5z"/><path d="M7 6v9a2 2 0 0 0 4 0V5c0-6-10-6-10 0v10c0 3 3 4 5 4"/></svg></button>
              <button class="tab" aria-label="Content"><svg class="ic" viewBox="0 0 32 32"><path class="f" d="M2 4h28v26H2z"/><path fill="#999" stroke="none" d="M2 4h28v6H2z"/><path stroke="#3b4453" stroke-width="4" stroke-dasharray="4 3" d="M7 15h19M7 21h19"/><path class="dk" d="M6 27h20"/><circle cx="30" cy="3" r="9" fill="#e9783f" stroke="#fff"/></svg></button>
              <span class="tab-fill"></span>
              <button class="tab more tab-on" aria-label="More">»</button>
            </div>

            <section class="layers">
              <div class="panel-head">
                <h2>Layers</h2>
                <div class="layer-tools">
                  <button aria-label="Match layer"><svg class="ic" viewBox="0 0 32 32"><use href="#stack" y="4"/><path class="b" d="M10 6H30L22 16H2z"/><circle class="f" cx="17" cy="6" r="6"/></svg></button>
                  <button aria-label="Edit states"><svg class="ic" viewBox="0 0 32 32"><use href="#stack" y="-2"/><path stroke="#f7d58c" stroke-width="5" d="M20 22l8 9"/><path stroke="#fff" stroke-width="4" d="M21 26l10-6"/></svg></button>
                  <button aria-label="Previous layer"><svg class="ic" viewBox="0 0 32 32"><use href="#stack" y="4"/><path class="b" stroke="#3b4453" d="M-1 8l11-8v5c7 0 10 3 10 10-3-3-6-4-10-3v5z"/></svg></button>
                  <button aria-label="Freeze below"><svg class="ic" viewBox="0 0 32 32"><use href="#stack" y="-1"/><path class="b" d="M24 17h4l-8 8H2l4-4h12z"/><path stroke="#fff" stroke-width="3" d="M28 18l-8 9"/><path class="wf" d="M17 31l1-9 7 6z"/></svg></button>
                  <button aria-label="Freeze above"><svg class="ic" viewBox="0 0 32 32"><use href="#stack" y="-1"/><path class="b" d="M24 17h4l-8 8H2l4-4h12z"/><path stroke="#fff" stroke-width="3" d="M20 30l7-9"/><path class="wf" d="M31 16l-1 9-7-6z"/></svg></button>
                  <button aria-label="Freeze"><svg class="ic" viewBox="0 0 32 32"><use href="#sheet"/><g class="cy" transform="translate(23 22)"><use href="#snow"/></g></svg></button>
                  <button aria-label="Layer off"><svg class="ic" viewBox="0 0 32 32"><use href="#sheet"/><circle cx="23" cy="18" r="6" fill="#7fdde3" stroke="none"/><path class="wf" d="M20 25h6v5h-6z"/></svg></button>
                  <button aria-label="Lock layer"><svg class="ic" viewBox="0 0 32 32"><use href="#sheet"/><path class="cy" d="M18 21v-4c0-6 9-6 9 0v4"/><path fill="#7fdde3" stroke="none" d="M16 20h14v10H16z"/><path class="dk" d="M23 23v4"/></svg></button>
                  <button aria-label="Unlock layer"><svg class="ic" viewBox="0 0 32 32"><use href="#sheet"/><path stroke="#f7d58c" d="M23 20v-3c0-6 8-6 8 0v3"/><path class="y" d="M13 20h14v10H13z"/><path class="dk" d="M20 23v4"/></svg></button>
                </div>
                <button class="dock" aria-label="Dock"><svg class="ic" viewBox="0 0 22 30"><use href="#dock"/></svg></button>
              </div>

              <div class="select tall">
                <span class="select-deco"><i class="dot"></i>
                  <svg width="20" height="24" viewBox="0 0 20 24" fill="#6b7485"><path d="M2 10h16v13H2z"/><path d="M5 10V6c0-6 10-6 10 0v4" fill="none" stroke="#6b7485" stroke-width="2"/></svg>
                  <svg width="20" height="20" viewBox="-10 -10 20 20" fill="none" stroke="#6b7485" stroke-width="2"><use href="#snow"/></svg>
                  <i class="swatch white"></i></span>
                <select class="has-layer" aria-label="Current layer"><option>0</option></select>
              </div>
              <div class="select tall second">
                <select aria-label="Layer state"><option>Unsaved Layer State</option></select>
              </div>

              <button class="toggle"><svg class="ic chev" viewBox="0 0 16 12"><path d="M1 2l7 8 7-8"/></svg>Hide Layer List</button>

              <div class="layer-list">
                <table>
                  <thead>
                    <tr>
                      <th class="c-eye"><svg class="ic" viewBox="0 0 26 26"><path class="f" d="M1 13c7-10 17-10 24 0-7 10-17 10-24 0z"/><circle cx="13" cy="13" r="4" fill="#d9d9d9" stroke="#2f333f"/></svg></th>
                      <th class="c-name"><div class="name-head"><svg class="ic" viewBox="0 0 18 18"><path d="M1 1h16v16H1z"/><path class="f" d="M17 1v16H1z"/></svg>Name<i class="sorted"></i><svg class="ic sort" viewBox="0 0 14 16"><path class="f" d="M2 6l5-5 5 5zM2 10l5 5 5-5z"/></svg></div></th>
                      <th class="c-small"><svg class="ic" viewBox="-10 -10 20 20"><use href="#snow"/></svg></th>
                      <th class="c-small"><svg class="ic" viewBox="0 0 20 20"><path class="f" d="M3 9h14v10H3z"/><path d="M6 9V5c0-5 8-5 8 0v4"/><path stroke="#2f333f" d="M10 13v4"/></svg></th>
                      <th class="c-mid"><svg class="ic" viewBox="0 0 20 20"><path d="M1 5h18M1 10h18"/><path stroke-width="3" d="M1 15h18"/></svg></th>
                      <th class="c-mid"><svg class="ic" viewBox="0 0 20 20"><path stroke-dasharray="2 2" d="M1 5h18"/><path stroke-dasharray="5 2" d="M1 10h18"/><path d="M1 15h18"/></svg></th>
                      <th class="c-last"><svg class="ic" viewBox="0 0 20 20"><path d="M1 5h14v3h4v8H1z"/><path d="M5 9h10v3H5z"/></svg></th>
                    </tr>
                  </thead>
                  <tbody>
                    <tr class="picked"><td class="c-on"><i class="dot"></i></td><td><i class="swatch white"></i>0</td><td></td><td></td><td>De...</td><td><hr></td><td></td></tr>
                    <tr><td class="c-on"><i class="dot"></i></td><td><i class="swatch yellow"></i>circulo</td><td></td><td></td><td>De...</td><td><hr></td><td></td></tr>
                    <tr><td class="c-on"><i class="dot"></i></td><td><i class="swatch cyan"></i>pentagono</td><td></td><td></td><td>De...</td><td><hr></td><td></td></tr>
                    <tr><td class="c-on"><i class="dot"></i></td><td><i class="swatch red"></i>quadrado</td><td></td><td></td><td>De...</td><td><hr></td><td></td></tr>
                    <tr><td class="c-on"><i class="dot"></i></td><td><i class="swatch magenta"></i>ret_ouro</td><td></td><td></td><td>De...</td><td><hr></td><td></td></tr>
                    <tr><td class="c-on"><i class="dot"></i></td><td><i class="swatch blue"></i>ret_r2</td><td></td><td></td><td>De...</td><td><hr></td><td></td></tr>
                    <tr><td class="c-on"><i class="dot"></i></td><td><i class="swatch green"></i>triangulo</td><td></td><td></td><td>De...</td><td><hr></td><td></td></tr>
                  </tbody>
                </table>
              </div>

              <div class="list-tools">
                <button aria-label="New layer"><svg class="ic" viewBox="0 0 28 28"><path d="M11 2h14l-8 12H3z"/><path stroke="#b5b5b5" d="M26 9l-8 11H2M26 15l-8 11H2"/></svg></button>
                <button aria-label="Layer states"><svg class="ic" viewBox="0 0 28 28"><path d="M10 0h13l-8 10H2zM2 15h9M2 20h9"/><path fill="#3b4453" d="M13 14h15v14H13z"/><path d="M16 19h2M20 19h5M16 24h2M20 24h5"/></svg></button>
                <button aria-label="New group"><svg class="ic" viewBox="0 0 28 28"><path class="f" d="M1 4h9l3 4h8v3H7L1 23z"/><path class="f" d="M8 12h19l-5 13H2z"/></svg></button>
                <button aria-label="New filter"><svg class="ic" viewBox="0 0 28 28"><path class="f" d="M1 4h9l3 4h8v3H7L1 23z"/><path class="f" d="M8 12h19l-5 13H2z"/><path fill="#3b4453" stroke="none" d="M17 12l-7 8h5l-2 5 8-8h-5z"/></svg></button>
                <span class="spacer"></span>
                <button class="minus" aria-label="Remove"></button>
                <button class="cols" aria-label="Columns"><svg class="ic" viewBox="0 0 22 22"><path d="M1 6h19v10H1zM7 6v10M14 6v10"/></svg><i class="caret"></i></button>
              </div>

              <div class="search">
                <svg width="38" height="26" viewBox="0 0 38 26" fill="none" stroke="#222" stroke-width="2"><circle cx="10" cy="10" r="9"/><path d="M16 16l8 8" stroke-width="3"/><path d="M25 10l5 5 5-5"/></svg>
                <input type="search" placeholder="Search for layer" aria-label="Search for layer">
              </div>
            </section>

            <section class="props">
              <div class="panel-head small">
                <h2>Properties</h2>
                <div class="segment"><button>All</button><button class="seg-on">My</button></div>
                <button aria-label="Edit list"><svg class="ic" viewBox="0 0 28 28"><path d="M10 25H1V2h19v9M5 7h11M5 12h9M5 17h6"/><path class="f" d="M11 22l9-9 6 5-9 9h-6zM21 11l2-1 5 5-1 2z"/></svg></button>
                <button class="dock" aria-label="Dock"><svg class="ic" viewBox="0 0 22 30"><use href="#dock"/></svg></button>
              </div>

              <div class="select space"><select aria-label="Selection" disabled><option>Model Space</option></select></div>

              <div class="form">
                <label for="color">Color</label>
                <div class="select"><span class="select-deco"><i class="swatch white"></i></span><select id="color" class="has-swatch"><option>ByLayer</option></select></div>
                <label for="layer">Layer</label>
                <div class="select"><select id="layer"><option>0</option></select></div>
                <label for="linetype">Linetype</label>
                <div class="select"><span class="select-deco"><i class="line"></i></span><select id="linetype" class="has-line"><option>ByLayer</option></select></div>
                <label for="ltscale">Linetype scale</label>
                <input id="ltscale" class="field" type="text" value="1.000">
                <label for="lweight">Lineweight</label>
                <div class="select"><select id="lweight"><option>ByLayer</option></select></div>
                <label for="transp">Transparency</label>
                <div class="pair">
                  <div class="slider"><input id="transp" type="range" min="0" max="90" value="0"><i class="tick"></i><output for="transp">0</output></div>
                  <button class="mode" aria-label="Transparency source"><svg class="ic" viewBox="0 0 28 28"><use href="#stack"/><path class="b" d="M10 2H28L20 12H2z"/></svg><i class="caret"></i></button>
                </div>
                <label for="tstyle">Text style</label>
                <div class="select"><select id="tstyle"><option>Standard</option></select></div>
                <label for="dstyle">Dimension style</label>
                <div class="select"><select id="dstyle"><option>Standard</option></select></div>
                <label for="mstyle">Multileader style</label>
                <div class="select"><select id="mstyle"><option>Standard</option></select></div>
                <label for="tabstyle">Table style</label>
                <div class="select"><select id="tabstyle"><option>Standard</option></select></div>
                <label for="ascale">Annotation scale</label>
                <div class="select"><select id="ascale"><option>1:1</option></select></div>
                <label for="theight">Text height</label>
                <div class="pair">
                  <input id="theight" class="field" type="text" value="0.200">
                  <button class="pick" aria-label="Pick height"><svg class="ic" viewBox="0 0 32 32"><path d="M2 0v28M30 0v12"/><path class="sb" d="M6 5h20"/><path class="b" d="M4 5l6-4v8zM28 5l-6-4v8z"/><path d="M24 14v18M15 23h17M20 19h8v8h-8z"/></svg></button>
                </div>
                <label for="pstyle">Plot style</label>
                <div class="select"><select id="pstyle"><option>ByColor</option></select></div>
                <label for="ptable">Plot style table</label>
                <div class="select"><select id="ptable"><option>None</option></select></div>
                <label for="pattach">Plot style attached to</label>
                <input id="pattach" class="field" type="text" value="Model" disabled>
                <label for="ptype">Plot table type</label>
                <input id="ptype" class="field" type="text" value="Not available" disabled>
              </div>
            </section>
          </aside>
        </div>

        <footer class="status">
          <button class="layout-tab model">Model</button>
          <button class="layout-tab plus" aria-label="New layout"><svg class="ic" viewBox="0 0 24 24"><path d="M12 1v22M1 12h22"/></svg></button>
          <button class="layout-tab">Layout1</button>
          <button class="layout-tab">Layout2</button>
          <div class="status-right">
            <span class="coords">14.641, 7.987 , 0.000</span>
            <button aria-label="Grid"><svg class="ic" viewBox="0 0 32 32"><path d="M8 1v30M16 1v30M24 1v30M1 8h30M1 16h30M1 24h30"/></svg></button>
            <button aria-label="Snap"><svg class="ic" viewBox="0 0 32 32"><path stroke-width="4" stroke-dasharray="4 6" d="M4 6h24M4 16h24M4 26h24"/></svg></button>
            <button aria-label="Ortho"><svg class="ic" viewBox="0 0 32 32"><path d="M1 0v31h31M1 21h10v10"/></svg></button>
            <button class="on" aria-label="Polar"><svg class="ic" viewBox="0 0 32 32"><path d="M16 17l12-14M13 17h19"/><path d="M24 7C10-3-2 12 4 23c6 10 24 7 24-6"/></svg></button>
            <button aria-label="Dynamic input"><svg class="ic" viewBox="0 0 32 32"><path d="M7 4v14M0 11h14"/><path class="f" d="M12 20h20v9H12z"/><path class="dk" d="M15 22v5"/></svg></button>
            <button aria-label="Lineweight"><svg class="ic" viewBox="0 0 32 32"><path class="f" d="M0 2h32v2H16v3H0zM0 11h32v2H16v5H0zM0 20h32v2H16v7H0z"/></svg></button>
            <button class="on" aria-label="Transparency"><svg class="ic" viewBox="0 0 32 32"><path d="M3 2h26v28H3z"/><path fill="url(#checks)" stroke="none" d="M6 6h20v20H6z"/></svg></button>
            <button class="on" aria-label="Selection cycling"><svg class="ic" viewBox="0 0 32 32"><path d="M10 1H6v30h4M21 1h5v14M12 6h7v7h-7z"/><circle cx="15" cy="21" r="4"/><path class="wf" stroke="#6a8fc0" d="M20 14l13 13-6 1 3 5-3 2-3-6-4 3z"/></svg></button>
            <button class="on" aria-label="Object snap tracking"><svg class="ic" viewBox="0 0 32 32"><path d="M23 5L2 28h28"/><path class="wf" d="M11 14h6v6h-6z"/></svg></button>
            <button class="on" aria-label="Object snap"><svg class="ic" viewBox="0 0 32 32"><path d="M12 5h19v26H4V13M1 1h8v8H1z"/></svg></button>
            <button class="on" aria-label="Annotation visibility"><svg class="ic wfill" viewBox="0 0 32 32"><use href="#plane" x="-2"/><circle cx="27" cy="8" r="7" stroke="#6a8fc0"/></svg></button>
            <button aria-label="Auto scale"><svg class="ic gfill" viewBox="0 0 32 32"><use href="#plane" x="-2"/><path class="y" d="M28 0l-9 12h6l-2 6 9-10h-6z"/></svg></button>
            <button aria-label="Annotation scale"><svg class="ic gfill" viewBox="0 0 32 32"><use href="#plane"/></svg></button>
            <button class="scale">1:1<i class="caret"></i></button>
            <button class="last" aria-label="Isolate"><svg class="ic" viewBox="0 0 32 32"><path d="M1 1h12v13H1zM13 21l7 10H6z"/><circle cx="25" cy="14" r="6"/></svg></button>
            <button class="last" aria-label="Settings"><svg class="ic" viewBox="0 0 20 20"><use href="#gear"/></svg></button>
          </div>
        </footer>
      </div>
    </div>
  </div>

</body>
</html>
```

FILE: styles.css
```css
* {
  margin: 0;
  padding: 0;
  box-sizing: border-box;
}

body {
  height: 100vh;
  display: flex;
  flex-direction: column;
  overflow: hidden;
  font-family: Inter, 'Liberation Sans', sans-serif;
  font-size: 22px;
  font-weight: 500;
  color: #e6e6e6;
  background: linear-gradient(90deg, #8c8179 0, #8c8179 22%, #2a2526 23%, #3a3434 89%, #a89c93 90%);
}

button, input, select {
  font: inherit;
  color: inherit;
  background: none;
  border: none;
  border-radius: 0;
  outline: none;
}

button {
  display: flex;
  align-items: center;
  justify-content: center;
}

h1, h2 {
  font-weight: 500;
}

/* icons */
.defs {
  position: absolute;
}

.ic {
  display: block;
  flex: none;
  width: 32px;
  height: 32px;
  overflow: visible;
  fill: none;
  stroke: #d9d9d9;
  stroke-width: 2px;
}

.ic text {
  fill: #d9d9d9;
  stroke: none;
  font-family: Inter, 'Liberation Sans', sans-serif;
  font-weight: 600;
}

.ic .tb { fill: #82bff8; }
.ic .tw { fill: #fff; }
.f { fill: #d9d9d9; stroke: none; }
.wf { fill: #fff; }
.wf:not([stroke]) { stroke: none; }
.b { fill: #93c8f7; }
.b:not([stroke]) { stroke: none; }
.y { fill: #f7d58c; }
.y:not([stroke]) { stroke: none; }
.r { fill: #ee6a66; stroke: none; }
.g { fill: #93d6a0; stroke: none; }
.sb { stroke: #82bff8; }
.sg { stroke: #7fd68d; }
.cy { stroke: #7fdde3; }
.dk { stroke: #4a505c; }
.gfill { fill: #d9d9d9; stroke: none; }
.wfill { fill: #fff; stroke: none; }
.nostroke { stroke: none; }

.caret {
  flex: none;
  border: 6px solid transparent;
  border-top: 9px solid #d9d9d9;
  border-bottom: 0;
}

.caret.up {
  border-top: 0;
  border-bottom: 9px solid #9a9a9a;
}

/* system menu bar */
.menubar {
  flex: none;
  height: 70px;
  margin-bottom: 2px;
  display: flex;
  align-items: center;
  padding: 0 30px 0 44px;
  font-size: 25px;
  color: #fff;
  background: linear-gradient(90deg, #94867c, #9d8979 50%, #a39488);
  text-shadow: 0 3px 8px rgba(0, 0, 0, 0.25);
}

.apple {
  width: 26px;
  height: 32px;
  margin-right: 43px;
}

.menus {
  display: flex;
  gap: 49px;
}

.app-name {
  font-size: 26px;
  font-weight: 700;
}

.notch {
  width: 345px;
}

.tray {
  margin-left: auto;
  display: flex;
  align-items: center;
  gap: 37px;
}

.clock {
  display: flex;
  gap: 14px;
  font-size: 26px;
}

/* window */
.window {
  flex: 1;
  min-height: 0;
  margin-bottom: 3px;
  display: flex;
  flex-direction: column;
  overflow: hidden;
  border-top: 3px solid #7c848f;
  border-radius: 20px;
  background: #3b4453;
}

.titlebar {
  height: 52px;
  display: flex;
  align-items: flex-start;
  justify-content: space-between;
}

.lights {
  flex: 1;
  display: flex;
  gap: 16px;
  padding: 15px 16px;
}

.light {
  width: 24px;
  height: 24px;
  border-radius: 50%;
}

.close { background: #ee6a5f; }
.mini { background: #f5bd4f; }
.full { background: #61c454; }

.title {
  display: flex;
  align-items: center;
  gap: 11px;
  height: 52px;
  font-size: 26px;
  font-weight: 700;
  color: #b1b4b9;
}

.doc-name {
  margin-left: 16px;
}

.user {
  flex: none;
  height: 42px;
  width: 238px;
  gap: 10px;
  justify-content: flex-start;
  padding-left: 11px;
  font-size: 23px;
  white-space: nowrap;
  background: #4c566a;
  border-left: 2px solid #252b35;
  border-bottom: 2px solid #252b35;
  margin-left: calc(50% - 535px);
}

.user .ic {
  width: 26px;
  height: 28px;
}

.user .caret {
  margin-left: -22px;
}

.toolbar {
  height: 61px;
  display: flex;
  justify-content: center;
  gap: 96px;
  padding-top: 10px;
  border-bottom: 2px solid #252c36;
}

.tools {
  display: flex;
  gap: 34px;
  height: 32px;
}

.workspace {
  flex: 1;
  min-height: 0;
  display: flex;
}

/* tool palette */
.palette {
  flex: none;
  width: 182px;
  display: flex;
  flex-direction: column;
  background: #3c4250;
  border-right: 2px solid #222830;
}

.tabs {
  flex: none;
  display: flex;
  height: 46px;
}

.palette .tabs {
  height: 44px;
}

.tab {
  width: 68px;
  background: #2f333f;
  border-right: 2px solid #252b35;
  border-bottom: 3px solid #252b35;
}

.tab-on {
  background: #3b4453;
  border-bottom-color: #3b4453;
}

.tab.more {
  width: 46px;
  font-size: 25px;
  font-weight: 300;
  color: #b9bbc0;
  border-bottom-color: #252b35;
}

.palette .more {
  flex: 1;
  border-right: none;
}

.group {
  flex: none;
  margin: 0 8px;
  padding-bottom: 16px;
  border-bottom: 2px solid #272d38;
}

.group-last {
  flex: 1 1 0;
  min-height: 0;
  padding: 0;
  border: none;
}

.group-head {
  display: flex;
  align-items: center;
  height: 46px;
  font-size: 20px;
  color: #f0f0f0;
}

.tri {
  margin-right: 10px;
  border: 8px solid transparent;
  border-top: 10px solid #f0f0f0;
  border-bottom: 0;
}

.gear {
  width: 20px;
  height: 20px;
  margin-left: auto;
  margin-right: 2px;
}

.group-grid {
  display: grid;
  grid-template-columns: repeat(3, 44px);
  grid-auto-rows: 52px;
  gap: 12px 16px;
}

.fly {
  position: relative;
}

.fly::after {
  content: '';
  position: absolute;
  right: 0;
  bottom: 3px;
  border-left: 8px solid transparent;
  border-bottom: 8px solid #999;
}

.palette-foot {
  flex: none;
  display: flex;
  gap: 36px;
  height: 48px;
  padding: 0 31px;
}

.palette-foot .ic,
.plus .ic {
  width: 22px;
  height: 22px;
}

.palette-foot .wide {
  width: 26px;
}

/* drawing area */
.stage {
  flex: 1;
  min-width: 0;
  display: flex;
  flex-direction: column;
}

.columns {
  flex: 1;
  min-height: 0;
  display: flex;
}

.drawing {
  flex: 0.457;
  display: flex;
  flex-direction: column;
}

.doc-tabs {
  display: flex;
  height: 44px;
  background: #3b4453;
}

.doc-tab {
  width: 48px;
  border-right: 2px solid #252b35;
}

.doc-tab.plus {
  width: 46px;
}

.doc-tab.current {
  width: 257px;
  padding-left: 6px;
  justify-content: flex-start;
  font-weight: 600;
  color: #fff;
  background: #4e586c;
}

.canvas {
  position: relative;
  flex: 1;
  background: #222830;
}

.view-label {
  display: flex;
  align-items: center;
  height: 28px;
  margin: 14px 24px;
  font-family: 'Noto Sans', sans-serif;
  font-size: 23px;
  font-weight: 600;
  color: #999;
}

.view-label span {
  line-height: 28px;
  padding: 0 17px 0 12px;
}

.view-label span + span {
  border-left: 2px solid #999;
}

.view-label .vp-plus {
  padding: 0 24px 0 2px;
  font-weight: 400;
}

.compass {
  position: absolute;
  right: 19px;
  top: 22px;
  width: 250px;
  height: 250px;
  overflow: visible;
}

.compass text {
  font-family: 'Liberation Sans', sans-serif;
  font-size: 42px;
  font-weight: bold;
  text-anchor: middle;
  fill: #a9aaac;
}

.compass .top {
  font-size: 21px;
  fill: #5b6067;
}

.wcs {
  position: absolute;
  right: 94px;
  top: 307px;
  width: 100px;
  height: 24px;
  gap: 12px;
  border-radius: 7px;
  font-family: 'Liberation Sans', sans-serif;
  font-size: 21px;
  color: #2a3038;
  background: #6b7279;
}

.ucs {
  position: absolute;
  left: 20px;
  bottom: 20px;
  width: 150px;
  height: 170px;
}

.ucs text {
  font-family: Lato, sans-serif;
  font-size: 36px;
  font-weight: 300;
  text-anchor: middle;
  fill: #d5d7d9;
}

.command {
  position: absolute;
  left: 130px;
  right: 130px;
  bottom: 0;
  height: 50px;
  display: flex;
  align-items: center;
  gap: 24px;
  padding: 0 16px 0 18px;
  font-family: 'Noto Sans', sans-serif;
  background: #3b4453;
}

.prompt {
  color: #b9bbc0;
}

.prompt .caret {
  margin-left: 4px;
  border-top-color: #b9bbc0;
}

.command-input {
  flex: 1;
  padding-left: 10px;
  font-size: 23px;
  font-style: italic;
}

.command-input::placeholder {
  color: #a3a7ae;
}

/* right side panels */
.inspector {
  flex: 0.543;
  min-width: 0;
  display: flex;
  flex-direction: column;
  background: #3b4453;
  border-left: 2px solid #222830;
}

.panel-tabs .tab {
  width: 105px;
}

.panel-tabs .tab.more {
  width: 48px;
  border-left: 2px solid #252b35;
  border-right: none;
}

.tab-fill {
  flex: 1;
  background: #2f333f;
  border-bottom: 3px solid #252b35;
}

.layers {
  padding: 0 20px 18px 22px;
  border-bottom: 2px solid #252b35;
}

.panel-head {
  display: flex;
  align-items: flex-start;
  height: 64px;
}

.panel-head h2 {
  font-size: 23px;
  line-height: 32px;
}

.layer-tools {
  flex: 1;
  display: flex;
  justify-content: center;
  gap: 16px;
  padding: 10px 48px 0 0;
}

.dock .ic {
  width: 22px;
  height: 30px;
}

.layers .dock {
  padding-top: 1px;
}

.select {
  position: relative;
  height: 38px;
}

.select select,
.field {
  appearance: none;
  width: 100%;
  height: 100%;
  padding: 0 12px;
  color: #fff;
  background: #4f596c;
  border: 2px solid #2e3c3d;
  border-radius: 4px;
}

.select::after {
  content: '';
  position: absolute;
  right: 9px;
  top: 50%;
  margin-top: -5px;
  border: 6px solid transparent;
  border-top: 9px solid #d9d9d9;
  border-bottom: 0;
  pointer-events: none;
}

.select-deco {
  position: absolute;
  left: 18px;
  top: 0;
  height: 100%;
  display: flex;
  align-items: center;
  gap: 15px;
  pointer-events: none;
}

.tall {
  height: 54px;
  margin: 0 -6px 2px -2px;
}

.tall.second {
  margin: 0 -5px 0 0;
}

.tall .select-deco {
  left: 21px;
}

.select .has-layer { padding-left: 162px; }
.select .has-swatch { padding-left: 56px; }
.select .has-line { padding-left: 106px; }

.line {
  width: 64px;
  height: 2px;
  background: #fff;
}

.dot {
  display: inline-block;
  width: 16px;
  height: 16px;
  border-radius: 50%;
  background: #d9d9d9;
}

.swatch {
  display: inline-block;
  width: 18px;
  height: 18px;
  border: 2px solid #000;
}

.white { background: #fff; }
.yellow { background: #fffb4d; }
.cyan { background: #6ff9fd; }
.red { background: #ea3f23; }
.magenta { background: #ea52f4; }
.blue { background: #1733f5; }
.green { background: #6cf547; }

.toggle {
  height: 52px;
  margin-bottom: 3px;
  padding-left: 7px;
  gap: 24px;
  color: #c3c6cb;
}

.toggle .chev {
  width: 16px;
  height: 12px;
}

.layer-list {
  height: 430px;
  background: #4f596b;
  border: 2px solid #2c313d;
}

.layer-list table {
  width: 100%;
  table-layout: fixed;
  border-collapse: collapse;
}

.layer-list th {
  height: 46px;
  background: #2f333f;
  border-right: 2px solid #2a2e3a;
  border-bottom: 2px solid #2c313d;
  text-align: left;
}

.layer-list th .ic {
  width: 20px;
  height: 20px;
  margin: 0 auto;
}

.layer-list .c-eye { width: 64px; }
.layer-list .c-eye .ic { width: 26px; height: 26px; }
.layer-list .c-name { background: #4f596b; }
.layer-list .c-small { width: 44px; }
.layer-list .c-mid { width: 94px; }
.layer-list .c-last { width: 54px; }

.name-head {
  position: relative;
  display: flex;
  align-items: center;
  padding: 0 12px 0 8px;
  font-weight: 700;
  line-height: 44px;
}

.layer-list .name-head .ic {
  width: 18px;
  height: 18px;
  margin: 0 12px 0 0;
}

.layer-list .name-head .sort {
  width: 14px;
  height: 16px;
  margin: 0 0 0 auto;
}

.sorted {
  position: absolute;
  left: 50%;
  bottom: 0;
  margin-left: -6px;
  border: 6px solid transparent;
  border-bottom: 8px solid #4da3f7;
  border-top: 0;
}

.layer-list td {
  height: 38px;
  padding: 0;
  line-height: 24px;
  color: #fff;
}

.layer-list td .dot,
.layer-list td .swatch {
  vertical-align: middle;
}

.layer-list td .swatch {
  margin-right: 18px;
}

.layer-list td.c-on {
  padding: 0 0 5px 28px;
}

.layer-list td:nth-child(5) {
  padding-left: 12px;
}

.layer-list hr {
  width: 65px;
  margin-left: 15px;
  border: none;
  border-top: 2px solid #fff;
}

.picked {
  background: #929eb0;
}

.list-tools {
  display: flex;
  align-items: center;
  gap: 32px;
  height: 52px;
  padding: 0 14px;
}

.list-tools .ic {
  width: 28px;
  height: 28px;
}

.spacer {
  flex: 1;
}

.minus {
  width: 16px;
  height: 2px;
  background: #7e848e;
}

.cols {
  gap: 4px;
}

.cols .ic {
  width: 22px;
  height: 22px;
}

.search {
  display: flex;
  align-items: center;
  gap: 8px;
  height: 40px;
  padding: 0 9px;
  border-radius: 9px;
  background: #fff;
}

.search input {
  appearance: none;
  flex: 1;
  font-size: 25px;
  font-weight: 400;
  color: #222;
}

.search input::placeholder {
  color: #bcbcbc;
}

.props {
  padding: 0 20px 0 22px;
}

.panel-head.small {
  height: 46px;
  gap: 22px;
}

.panel-head.small h2 {
  flex: 1;
}

.panel-head .ic {
  margin-top: 1px;
}

.props .panel-head .ic {
  height: 28px;
  width: 28px;
}

.props .panel-head .dock .ic {
  width: 22px;
}

.segment {
  display: flex;
  height: 28px;
  border: 2px solid #292f3b;
  font-size: 18px;
}

.segment button {
  width: 55px;
  color: #7d828d;
}

.segment .seg-on {
  width: 62px;
  color: #fff;
  background: #4f596c;
  border-left: 2px solid #292f3b;
}

.space {
  height: 42px;
  margin-bottom: 13px;
}

.space::after {
  opacity: 0.4;
}

.select select:disabled,
.field:disabled {
  color: #838994;
  background: #434b5c;
  border-color: #3c4654;
  opacity: 1;
}

.form {
  display: grid;
  grid-template-columns: 34% 1fr;
  grid-auto-rows: 38px;
  gap: 8px 20px;
  padding-right: 6px;
}

.form label {
  line-height: 36px;
  text-align: right;
  color: #d0d3d7;
}

.field {
  min-width: 0;
  padding: 2px 6px 0;
}

.pair {
  display: flex;
  gap: 6px;
}

.slider {
  position: relative;
  flex: 1;
  height: 34px;
  margin: 2px 0 0 6px;
  background: #4f596c;
  border: 2px solid #2e3c3d;
}

.slider input {
  appearance: none;
  width: 100%;
  height: 100%;
}

.slider input::-webkit-slider-thumb {
  appearance: none;
  width: 3px;
  height: 26px;
  background: linear-gradient(#5f9cf5 6px, transparent 6px, transparent 20px, #5f9cf5 20px);
}

.tick {
  position: absolute;
  left: 50%;
  bottom: 2px;
  width: 2px;
  height: 12px;
  background: #878e9b;
}

.slider output {
  position: absolute;
  right: 6px;
  top: 2px;
  line-height: 30px;
  color: #fff;
}

.mode,
.pick {
  width: 78px;
  gap: 14px;
  background: #4f596c;
  border: 2px solid #2e3c3d;
  border-radius: 4px;
}

.mode .ic {
  width: 28px;
  height: 28px;
}

.pick {
  width: 38px;
  background: none;
}

/* status bar */
.status {
  flex: none;
  display: flex;
  height: 47px;
  border-top: 2px solid #222830;
  border-bottom: 1px solid #222830;
  background: #3b4453;
}

.layout-tab {
  width: 118px;
  color: #a8adb5;
  border-right: 2px solid #252b35;
}

.layout-tab.model {
  width: 120px;
  color: #fff;
  font-weight: 600;
  background: #4e586c;
}

.layout-tab.plus {
  width: 46px;
}

.status-right {
  margin-left: auto;
  display: flex;
  align-items: center;
  gap: 4px;
  padding: 0 7px 0 19px;
  border-left: 2px solid #252b35;
}

.coords {
  padding-right: 8px;
  color: #b9bcc1;
}

.status-right button {
  width: 40px;
  height: 40px;
}

.status-right .on {
  background: #6a8fc0;
}

.status-right .on .ic:not(.wfill) {
  stroke: #fff;
}

.status-right .scale {
  width: 46px;
  gap: 8px;
  color: #b9bcc1;
}

.status-right .last {
  width: 46px;
}
```
